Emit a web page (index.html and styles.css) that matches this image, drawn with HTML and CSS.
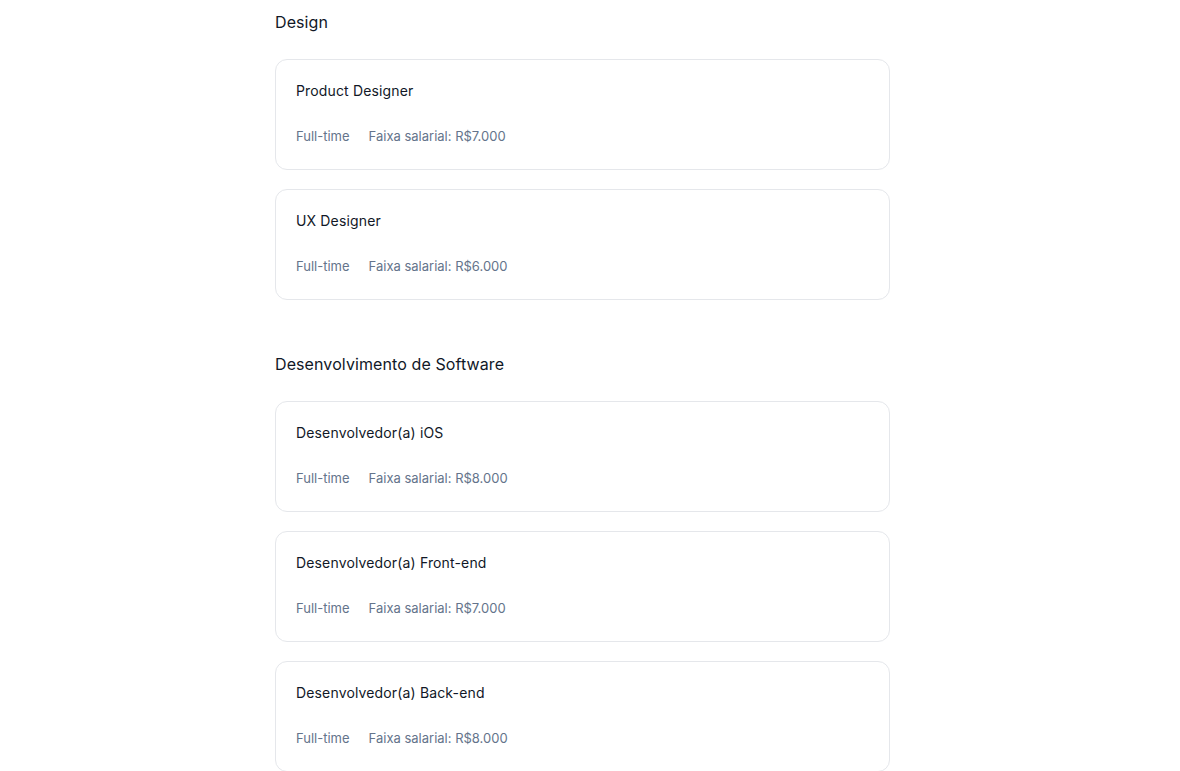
FILE: index.html
```html
<!DOCTYPE html>
<html lang="pt-BR">
<head>
<meta charset="utf-8">
<title>Vagas</title>
<link rel="stylesheet" href="styles.css">
</head>
<body>
<main class="page">
  <section class="group">
    <h2 class="group-title">Design</h2>
    <div class="cards">
      <article class="card">
        <h3 class="card-title">Product Designer</h3>
        <div class="meta"><span>Full-time</span><span>Faixa salarial: R$7.000</span></div>
      </article>
      <article class="card">
        <h3 class="card-title">UX Designer</h3>
        <div class="meta"><span>Full-time</span><span>Faixa salarial: R$6.000</span></div>
      </article>
    </div>
  </section>
  <section class="group">
    <h2 class="group-title">Desenvolvimento de Software</h2>
    <div class="cards">
      <article class="card">
        <h3 class="card-title">Desenvolvedor(a) iOS</h3>
        <div class="meta"><span>Full-time</span><span>Faixa salarial: R$8.000</span></div>
      </article>
      <article class="card">
        <h3 class="card-title">Desenvolvedor(a) Front-end</h3>
        <div class="meta"><span>Full-time</span><span>Faixa salarial: R$7.000</span></div>
      </article>
      <article class="card">
        <h3 class="card-title">Desenvolvedor(a) Back-end</h3>
        <div class="meta"><span>Full-time</span><span>Faixa salarial: R$8.000</span></div>
      </article>
    </div>
  </section>
</main>
</body>
</html>
```
FILE: styles.css
```css
* { box-sizing: border-box; }
html, body { margin: 0; padding: 0; background: #ffffff; }
body {
  font-family: Inter, "Noto Sans", sans-serif;
  color: #111827;
}
.page {
  width: 615px;
  margin-left: 275px;
  padding-top: 10px;
  display: flex;
  flex-direction: column;
  gap: 52px;
}
.group-title {
  margin: 0 0 25px;
  font-size: 16px;
  line-height: 24px;
  font-weight: 400;
  letter-spacing: 0.1px;
  color: #111827;
}
.cards {
  display: flex;
  flex-direction: column;
  gap: 19px;
}
.card {
  border: 1px solid #e5e7eb;
  border-radius: 12px;
  padding: 21px 20px 23px;
  height: 111px;
}
.card-title {
  margin: 0 0 25px;
  font-size: 14px;
  line-height: 20px;
  font-weight: 400;
  letter-spacing: 0.15px;
  color: #111827;
}
.meta {
  display: flex;
  gap: 19px;
  font-size: 13px;
  line-height: 20px;
  color: #64748b;
}
```
